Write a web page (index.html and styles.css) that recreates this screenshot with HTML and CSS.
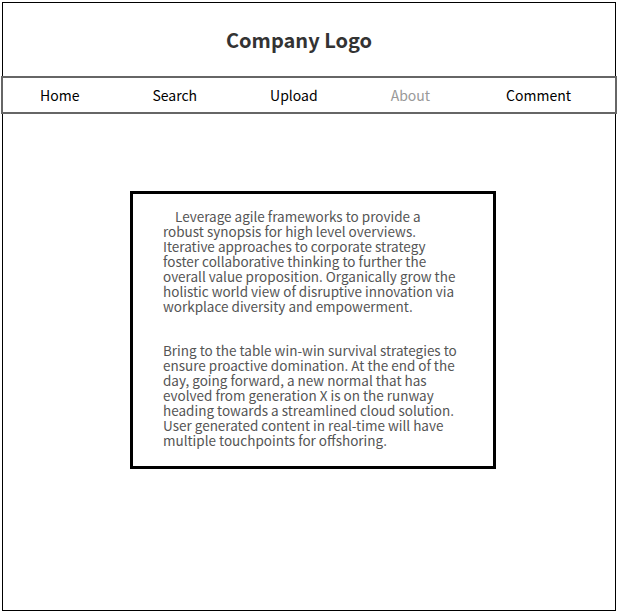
FILE: index.html
```html
<!DOCTYPE html>
<html>
<head>
<meta charset="utf-8">
<link rel="stylesheet" href="styles.css">
</head>
<body>
<div class="frame">
  <header class="header">Company Logo</header>
  <nav class="nav">
    <a class="nav-item">Home</a>
    <a class="nav-item">Search</a>
    <a class="nav-item">Upload</a>
    <a class="nav-item muted">About</a>
    <a class="nav-item comment">Comment</a>
  </nav>
  <main class="main">
    <div class="card">
      <p class="para indent">Leverage agile frameworks to provide a robust synopsis for high level overviews. Iterative approaches to corporate strategy foster collaborative thinking to further the overall value proposition. Organically grow the holistic world view of disruptive innovation via workplace diversity and empowerment.</p>
      <p class="para">Bring to the table win-win survival strategies to ensure proactive domination. At the end of the day, going forward, a new normal that has evolved from generation X is on the runway heading towards a streamlined cloud solution. User generated content in real-time will have multiple touchpoints for offshoring.</p>
    </div>
  </main>
</div>
</body>
</html>
```
FILE: styles.css
```css
html, body {
  margin: 0;
  padding: 0;
  background: #fff;
}
body {
  font-family: "Noto Sans CJK SC", "Noto Sans", sans-serif;
}
.frame {
  margin: 2px;
  width: 612px;
  height: 607px;
  border: 1px solid #000;
  display: flex;
  flex-direction: column;
}
.header {
  height: 73px;
  display: flex;
  align-items: center;
  justify-content: center;
  padding-right: 20px;
  font-size: 20px;
  font-weight: bold;
  color: #333;
}
.nav {
  margin: 0 -2px;
  height: 34px;
  border: 2px solid #666;
  display: flex;
  align-items: center;
  gap: 73px;
  padding: 0 0 0 37px;
  font-size: 14px;
  color: #000;
}
.nav-item {
  cursor: pointer;
}
.comment {
  margin-left: 3px;
}
.muted {
  color: #999;
}
.main {
  flex: 1;
}
.card {
  margin: 77px 0 0 127px;
  width: 300px;
  padding: 15px 30px 18px 30px;
  border: 3px solid #000;
  color: #555;
  font-size: 13.5px;
  line-height: 15px;
}
.para {
  margin: 0;
}
.para + .para {
  margin-top: 29px;
}
.indent {
  text-indent: 12px;
}
```
